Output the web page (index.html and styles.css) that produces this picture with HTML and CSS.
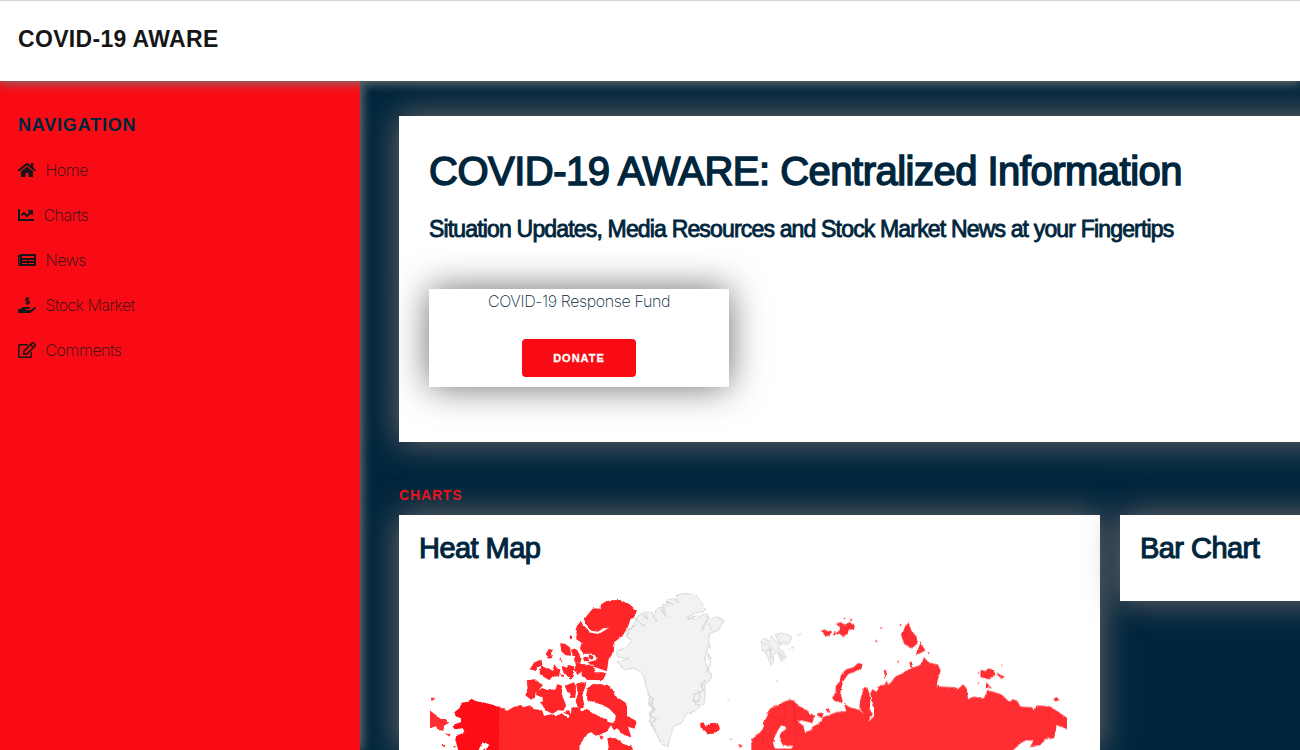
FILE: index.html
```html
<!DOCTYPE html>
<html lang="en">
<head>
<meta charset="utf-8">
<title>COVID-19 AWARE</title>
<link rel="stylesheet" href="styles.css">
</head>
<body>
<header class="topbar"><span class="brand">COVID-19 AWARE</span></header>
<div class="layout">
  <nav class="sidebar">
    <h2 class="nav-title">NAVIGATION</h2>
    <a class="nav-link"><svg class="icon" viewBox="0 0 576 512"><path d="M280.37 148.26L96 300.11V464a16 16 0 0 0 16 16l112.06-.29a16 16 0 0 0 15.92-16V368a16 16 0 0 1 16-16h64a16 16 0 0 1 16 16v95.64a16 16 0 0 0 16 16.05L464 480a16 16 0 0 0 16-16V300L295.67 148.26a12.19 12.19 0 0 0-15.3 0zM571.6 251.47L488 182.56V44.05a12 12 0 0 0-12-12h-56a12 12 0 0 0-12 12v72.61L318.47 43a48 48 0 0 0-61 0L4.34 251.47a12 12 0 0 0-1.6 16.9l25.5 31A12 12 0 0 0 45.15 301l235.22-193.74a12.19 12.19 0 0 1 15.3 0L530.9 301a12 12 0 0 0 16.9-1.6l25.5-31a12 12 0 0 0-1.7-16.93z"/></svg><span>Home</span></a>
    <a class="nav-link"><svg class="icon icon-square" viewBox="0 0 512 512"><path d="M496 384H64V80c0-8.84-7.16-16-16-16H16C7.16 64 0 71.16 0 80v336c0 17.67 14.33 32 32 32h464c8.84 0 16-7.16 16-16v-32c0-8.84-7.16-16-16-16zM464 96H345.94c-21.38 0-32.09 25.85-16.97 40.97l32.4 32.4L288 242.75l-73.37-73.37c-12.5-12.5-32.76-12.5-45.25 0l-68.69 68.69c-6.25 6.25-6.25 16.38 0 22.63l22.62 22.62c6.25 6.25 16.38 6.25 22.63 0L192 237.25l73.37 73.37c12.5 12.5 32.76 12.5 45.25 0l96-96 32.4 32.4c15.12 15.12 40.97 4.41 40.97-16.97V112c.01-8.84-7.15-16-15.99-16z"/></svg><span>Charts</span></a>
    <a class="nav-link"><svg class="icon" viewBox="0 0 576 512"><path d="M552 64H88c-13.255 0-24 10.745-24 24v8H24c-13.255 0-24 10.745-24 24v272c0 30.928 25.072 56 56 56h472c26.51 0 48-21.49 48-48V88c0-13.255-10.745-24-24-24zM56 400a8 8 0 0 1-8-8V144h16v248a8 8 0 0 1-8 8zm236-16H140c-6.627 0-12-5.373-12-12v-8c0-6.627 5.373-12 12-12h152c6.627 0 12 5.373 12 12v8c0 6.627-5.373 12-12 12zm208 0H348c-6.627 0-12-5.373-12-12v-8c0-6.627 5.373-12 12-12h152c6.627 0 12 5.373 12 12v8c0 6.627-5.373 12-12 12zm-208-96H140c-6.627 0-12-5.373-12-12v-8c0-6.627 5.373-12 12-12h152c6.627 0 12 5.373 12 12v8c0 6.627-5.373 12-12 12zm208 0H348c-6.627 0-12-5.373-12-12v-8c0-6.627 5.373-12 12-12h152c6.627 0 12 5.373 12 12v8c0 6.627-5.373 12-12 12zm0-96H140c-6.627 0-12-5.373-12-12v-40c0-6.627 5.373-12 12-12h360c6.627 0 12 5.373 12 12v40c0 6.627-5.373 12-12 12z"/></svg><span>News</span></a>
    <a class="nav-link"><svg class="icon" viewBox="0 0 576 512"><path d="M271.06 144.3l54.27 14.3a8.59 8.59 0 0 1 6.63 8.1c0 4.6-4.09 8.4-9.12 8.4h-35.6a30 30 0 0 1-11.19-2.2c-5.24-2.2-11.28-1.7-15.3 2l-19 17.5a11.68 11.68 0 0 0-2.25 2.66 11.42 11.42 0 0 0 3.88 15.74 83.77 83.77 0 0 0 34.51 11.5V240c0 8.8 7.83 16 17.37 16h17.37c9.55 0 17.38-7.2 17.38-16V222.4c32.93-3.6 57.84-31 53.5-63-3.15-23-22.46-41.3-46.56-47.7L282.68 97.4a8.59 8.59 0 0 1-6.63-8.1c0-4.6 4.09-8.4 9.12-8.4h35.6A30 30 0 0 1 332 83.1c5.23 2.2 11.28 1.7 15.3-2l19-17.5A11.31 11.31 0 0 0 368.47 61a11.43 11.43 0 0 0-3.84-15.78 83.82 83.82 0 0 0-34.52-11.5V16c0-8.8-7.82-16-17.37-16H295.37C285.82 0 278 7.2 278 16V33.6c-32.89 3.6-57.85 31-53.51 63C227.63 119.6 247 137.9 271.06 144.3ZM565.27 328.1c-11.8-10.7-30.2-10-42.6 0L430.27 402a63.64 63.64 0 0 1-40 14H272a16 16 0 0 1 0-32h78.29c15.9 0 30.71-10.9 33.25-26.6a31.2 31.2 0 0 0 .46-5.46A32 32 0 0 0 352 320H192a117.66 117.66 0 0 0-74.1 26.29L71.4 384H16A16 16 0 0 0 0 400v96a16 16 0 0 0 16 16H372.77a64 64 0 0 0 40-14L564 377a32 32 0 0 0 1.28-48.9Z"/></svg><span>Stock Market</span></a>
    <a class="nav-link"><svg class="icon" viewBox="0 0 576 512"><path d="M402.3 344.9l32-32c5-5 13.7-1.5 13.7 5.7V464c0 26.5-21.5 48-48 48H48c-26.5 0-48-21.5-48-48V112c0-26.5 21.5-48 48-48h273.5c7.1 0 10.7 8.6 5.7 13.7l-32 32c-1.5 1.5-3.5 2.3-5.7 2.3H48v352h352V350.5c0-2.1.8-4.1 2.3-5.6zm156.6-201.8L296.3 405.7l-90.4 10c-26.2 2.9-48.5-19.2-45.6-45.6l10-90.4L432.9 17.1c22.9-22.9 59.9-22.9 82.7 0l43.2 43.2c22.9 22.9 22.9 60 .1 82.8zM460.1 174L402 115.9 216.2 301.8l-7.3 65.3 65.3-7.3L460.1 174zm64.8-79.7l-43.2-43.2c-4.1-4.1-10.8-4.1-14.8 0L436 82l58.1 58.1 30.9-30.9c4-4.2 4-10.8-.1-14.9z"/></svg><span>Comments</span></a>
  </nav>
  <main class="content">
    <section class="card hero">
      <h1 class="hero-title">COVID-19 AWARE: Centralized Information</h1>
      <h3 class="hero-sub">Situation Updates, Media Resources and Stock Market News at your Fingertips</h3>
      <div class="fund">
        <div class="fund-title">COVID-19 Response Fund</div>
        <button class="donate">DONATE</button>
      </div>
    </section>
    <h6 class="section-label">CHARTS</h6>
    <div class="charts">
      <section class="card chart heat">
        <h2 class="chart-title">Heat Map</h2>
        <svg class="map" viewBox="420 585 660 165">
          <defs>
            <filter id="coast" x="-5%" y="-5%" width="110%" height="110%"><feTurbulence type="fractalNoise" baseFrequency=".25" numOctaves="2" seed="4"/><feDisplacementMap in="SourceGraphic" scale="2.6" xChannelSelector="R" yChannelSelector="G"/></filter>
            <clipPath id="extent"><rect x="430.500" y="585" width="636.500" height="190"/></clipPath>
          </defs>
          <g clip-path="url(#extent)"><g filter="url(#coast)">
            <g transform="translate(420 585) scale(.33333)">
              <path class="canada" d="M236 364L262 377L281 366L303 360L310 367L330 361L344 372L367 378L372 392L394 388L408 394L425 385L443 399L455 382L470 392L473 374L487 380L498 370L510 380L530 390L560 405L575 417L560 440L535 450L510 440L490 462L478 482L475 530L236 530Z"/>
              <path class="alaska" d="M237 366L218 359L188 352L167 349L155 341L143 350L125 353L119 369L103 382L107 394L123 400L122 412L98 420L104 433L129 430L133 441L108 454L106 466L111 482L125 530L237 530Z"/>
              <path class="water" d="M176 495L184 478L194 472L208 480L203 488L190 495Z"/>
              <path class="russia" d="M10 367L31 377L49 391L62 402L77 402L87 413L72 422L71 437L58 436L47 424L31 430L10 430ZM33 338L44 338L43 346L34 348ZM75 445L91 446L88 455ZM69 480l6 0 0 5-6 0ZM101 482l7 2-6 5Z"/>
              <path class="canada" d="M320 286L345 283L369 301L347 323L345 337L333 344L316 331L323 309ZM350 318L367 309L381 315L407 313L411 298L424 301L426 331L438 359L431 377L416 376L397 386L380 377L359 353L369 347L367 338L348 329ZM365 222L367 241L354 247L347 258L330 252L342 233ZM364 244L379 249L398 257L402 237L414 252L421 253L417 275L398 274L388 286L363 271L358 263ZM377 207L387 191L399 194L393 204L397 218L386 221L381 212ZM420 175L435 176L451 188L453 212L437 211L425 200ZM459 189L471 194L480 210L468 218L458 204ZM450 151l6 3 0 9-7-5ZM425 242L440 248L447 240L463 245L461 274L446 276L431 265ZM420 216L428 234L418 224ZM466 230L485 237L510 239L524 250L520 282L503 285L486 274L484 258L468 248ZM434 302L448 297L463 292L468 320L465 339L452 335L442 321ZM472 294L499 292L485 317L489 340L491 370L473 366L467 345L477 331ZM466 211l15 1 0 13-14-3ZM491 220l13-4 4 12-12 0ZM455 370L472 367L476 380L462 391ZM430 383L445 375L456 394ZM504 307L514 312L514 350L501 344ZM423 269l9 0 0 6-8 0Z"/>
            </g>
            <g transform="translate(570 585) scale(.33333)">
              <path class="canada" d="M42 103L69 70L91 71L94 57L118 46L151 45L177 56L201 78L191 99L182 101L174 125L159 151L134 171L131 202L116 222L111 259L75 247L52 232L83 224L72 206L40 206L30 190L35 173L19 163L20 123L31 111L43 123L63 143L87 147L117 128L100 130L84 140L65 137L49 119ZM39 244L48 249L55 257L75 262L101 262L107 270L98 286L52 284L38 270ZM18 297L49 293L44 314L35 327L43 360L32 372L17 351L24 324ZM54 309L69 297L112 299L129 315L132 330L165 352L171 364L171 393L201 409L193 431L174 425L184 457L163 451L141 430L132 436L119 415L135 408L137 391L118 371L99 360L78 354L56 344L49 326ZM0 260L12 266L9 277L0 284ZM0 302L18 299L15 337L0 340ZM4 368L28 367L37 379L59 376L62 397L75 425L65 441L45 450L28 470L28 500L0 500ZM3 194L15 191L27 212L8 213ZM12 218L35 220L31 234L14 231ZM16 240L30 235L36 258L23 270L15 258ZM67 431L83 428L91 448L78 452L68 446ZM87 451L101 455L95 465ZM112 459L137 460L160 477L188 486L188 500L118 500ZM57 208l14 6-4 10-11-4ZM39 221l7-2 4 9-7 1ZM0 151l5 3 0 8-5 0Z"/>
              <path class="nodata" d="M139 203L144 196L169 187L187 166L170 157L168 138L190 123L203 94L223 81L247 82L251 98L260 70L277 67L285 92L280 57L292 65L289 46L308 40L321 44L318 31L345 25L377 29L389 45L407 69L402 80L376 84L351 97L376 104L398 89L413 85L413 100L437 95L462 106L445 136L419 145L414 184L405 229L426 278L404 298L405 353L375 378L349 387L334 415L311 424L292 486L277 479L259 448L242 417L239 382L252 374L235 356L240 336L227 301L222 274L206 257L190 249L167 255L151 244L143 230L177 220L144 216Z"/>
              <path class="shore" d="M193 99L226 125M215 88L232 102L228 86M251 98L262 108M273 75L292 96M291 51L313 59M315 45L327 54M349 100L382 93M413 100L395 139M414 116L426 137M414 205L421 239L408 266M408 286L390 302L402 315L371 330L370 350L389 362M385 315L391 342M232 326L250 342L237 358L256 373L239 390L258 402L244 420L259 440M243 350L249 365L245 378M171 152L178 136L194 121M419 177L420 190M413 213L427 221M370 347L383 350L388 344"/>
              <path class="canada" d="M391 414L400 412L408 426L418 415L435 413L446 419L450 432L431 446L414 447L403 436L391 426Z"/>
              <path class="shore" d="M472 348l6-3M481 461l5 3"/>
            </g>
            <g transform="translate(740 600) scale(.33333)">
              <path class="russia" d="M-6 434l9 0 4 8-9 0ZM34 416L60 397L72 381L70 369L84 344L78 342L92 324L115 316L129 306L150 299L166 303L172 315L204 333L224 348L217 369L185 361L174 365L192 378L199 394L221 378L236 371L253 350L290 336L319 333L312 311L330 322L360 330L371 342L358 320L361 298L372 262L383 263L391 296L389 333L399 340L384 367L402 349L402 319L394 298L391 280L397 268L410 275L420 256L449 252L464 232L510 206L540 196L552 172L567 188L594 194L602 212L591 248L602 260L648 262L650 268L672 254L681 268L684 298L700 290L732 295L741 270L785 283L803 301L830 300L842 320L880 322L883 332L890 316L930 319L984 355L990 357L990 391L968 382L950 374L947 394L942 415L918 417L900 436L877 438L862 447L880 424L858 421L835 435L820 450L830 520L34 520Z"/>
              <path class="russia" d="M276 290L287 278L287 258L299 245L303 222L320 207L340 202L353 190L367 190L366 204L340 217L325 222L310 243L301 277L309 306L285 304ZM243 94L252 88L266 94L272 88L276 98L267 108L253 105ZM288 72L301 66L314 74L329 66L345 78L341 88L326 89L324 101L309 110L296 99L281 107L282 97L299 92L300 82ZM331 56l8 5-8 2ZM311 52l6 0-5 8ZM421 80l8 3-7 4ZM406 119l8 6-7 1ZM471 185l8-4-5 8ZM431 210l9 2-4 22ZM233 340L249 338L247 355L237 350ZM259 328l8-3 4 10-10 1ZM484 108L495 80L506 68L515 93L530 110L532 131L516 145L493 132ZM527 165L542 127L556 152ZM478 72l8 1-4 6ZM562 156l7 2-4 5ZM722 209L737 213L744 205L763 209L766 225L748 238L721 231ZM769 220L795 230L783 237ZM739 247L756 265L737 263ZM713 216l5 1-4 5ZM713 247l6 2-5 3ZM784 193l4 2-4 3ZM939 298L950 291L959 300L946 304ZM508 187l7-2 5 18-9-1ZM441 241l3 15-10-2Z"/>
              <path class="water" d="M123 377L137 378L138 387L120 400L119 418L130 438L160 436L155 446L105 446L99 429L108 400ZM185 361L191 371L211 378L218 388L196 396ZM861 422L880 422L866 448L838 447L850 425ZM586 262L598 250L613 258L599 254Z"/>
              <path class="border" d="M136 320L130 365L90 344M160 304L172 423L153 440M70 369L71 435M925 320L925 365"/>
              <path class="nodata" d="M64 129L66 118L79 116L86 126L95 108L108 125L122 131L114 145L133 156L137 174L123 183L112 153L100 166L101 184L94 196L82 166L75 157L87 150L67 153ZM106 104L124 99L145 104L156 112L145 131L120 128Z"/>
              <path class="shore" d="M172 107L183 102M154 142l8 0M146 147l4 0M138 198l5 0M107 241l5 0M70 130L91 140L93 176M82 149L101 146M116 157L130 174"/>
            </g>
          </g></g>
        </svg>
      </section>
      <section class="card chart bar"><h2 class="chart-title">Bar Chart</h2></section>
    </div>
  </main>
</div>
</body>
</html>
```
FILE: styles.css
```css
* { box-sizing: border-box; }
body { margin: 0; width: 1300px; height: 750px; overflow: hidden; background: #00263d; color: #00263d; font-family: "Liberation Sans", Arial, sans-serif; }
h1, h2, h3, h6 { margin: 0; }
.topbar { height: 81px; background: #fff; border-top: 1px solid #d3d7dd; padding: 24px 18px; position: relative; z-index: 2; box-shadow: 0 2px 10px #777; }
.brand { display: block; color: #161616; font-weight: 700; font-size: 23px; line-height: 28px; letter-spacing: .33px; white-space: nowrap; }
.layout { display: flex; height: 669px; overflow: hidden; }
.sidebar { flex: 0 0 360px; background: #f80b14; padding: 33px 18px; box-shadow: 2px 0 10px #777; position: relative; z-index: 1; }
.nav-title { font-size: 18px; line-height: 22px; letter-spacing: .8px; margin-bottom: 11px; }
.nav-link { display: flex; align-items: center; height: 45px; gap: 9.5px; color: #161616; font: 200 16px/20px Inter, sans-serif; letter-spacing: -.48px; }
.icon { width: 18px; height: 16px; fill: #161616; flex: none; }
.icon-square { width: 16px; }
.content { flex: none; width: 1062px; padding: 35px 0 0 39px; }
.card { background: #fff; box-shadow: 0 0 32px rgba(118,108,108,.98); }
.hero { height: 326px; padding: 30px; }
.hero-title { font-weight: 400; font-size: 40px; line-height: 50px; letter-spacing: -.51px; -webkit-text-stroke: 1.5px #00263d; white-space: nowrap; }
.hero-sub { font-weight: 400; font-size: 23px; line-height: 30px; letter-spacing: -.83px; margin-top: 18px; -webkit-text-stroke: .85px #00263d; white-space: nowrap; }
.fund { width: 300px; height: 98px; margin-top: 45px; text-align: center; background: #fff; box-shadow: 0 0 36px rgba(0,0,0,.58); }
.fund-title { height: 50px; font: 200 16px/25px Inter, sans-serif; letter-spacing: -.38px; }
.donate { width: 114px; height: 38px; border: 0; border-radius: 4px; padding: 0; background: #f80b14; color: #fff; font: 700 11px/38px "Liberation Sans", Arial, sans-serif; letter-spacing: 1px; display: block; margin: 0 auto; -webkit-text-stroke: .3px #fff; }
.section-label { margin-top: 44px; height: 29px; font-size: 14px; line-height: 18px; letter-spacing: .85px; color: #f80b14; }
.charts { display: grid; grid-template-columns: 701px 301px; gap: 20px; align-items: start; }
.chart { padding: 17px 20px; }
.bar { height: 86px; }
.heat { height: 235px; padding-bottom: 0; }
.chart-title { font-weight: 400; font-size: 29px; line-height: 32px; letter-spacing: -.55px; -webkit-text-stroke: 1.1px #00263d; white-space: nowrap; }
.map { display: block; width: 660px; height: 165px; margin: 21px 0 0 1px; }
.canada { fill: #ff262a; }
.alaska { fill: #ff0b14; }
.russia { fill: #ff2e33; }
.nodata { fill: #f2f2f2; stroke: #d8d8d8; stroke-width: 3; }
.shore { fill: none; stroke: #d8d8d8; stroke-width: 4; }
.water { fill: #fff; }
.border { fill: none; stroke: #ee2329; stroke-width: 2; }
```
